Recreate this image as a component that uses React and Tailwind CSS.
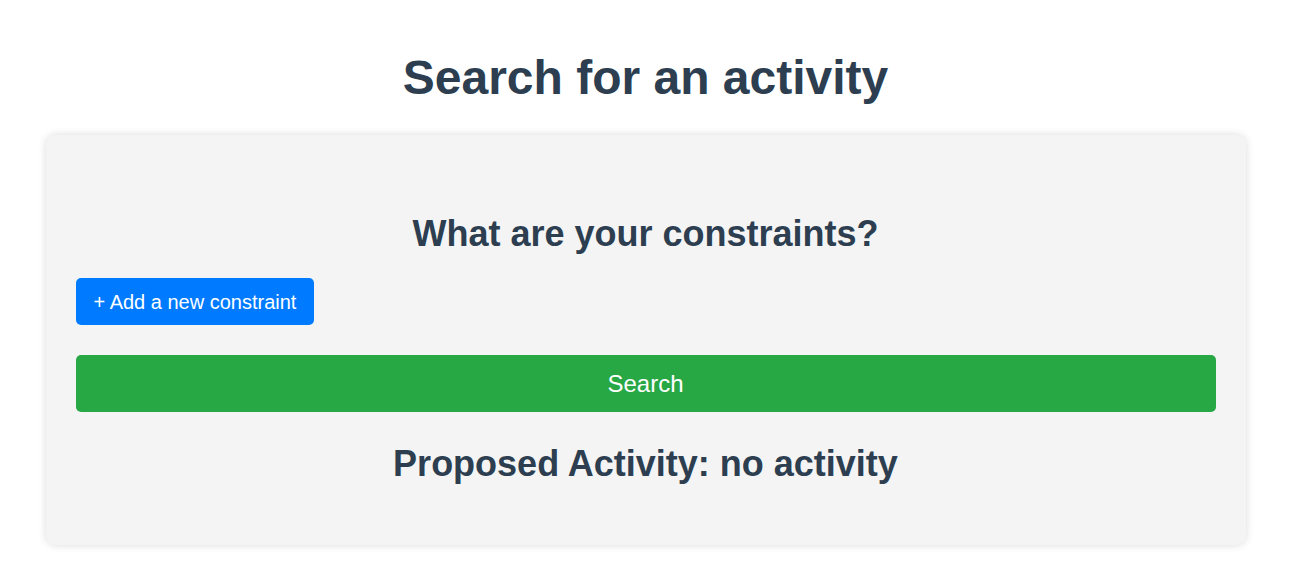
export default function App() {
  return (
    <div className="min-h-screen bg-white pr-[12px] font-['Liberation_Sans',Arial,sans-serif] text-[#2c3e50]">
      {/* Titre principal */}
      <h1 className="pt-[50px] text-center text-[48px] leading-[55px] font-bold">
        Search for an activity
      </h1>

      {/* Carte de recherche */}
      <div className="mx-auto mt-[30px] w-[1200px] rounded-[10px] bg-[#f4f4f4] px-[30px] pt-[78px] pb-[61px] shadow-[0_0_8px_rgba(0,0,0,0.15)]">
        <h2 className="text-center text-[36px] leading-[41px] font-bold">What are your constraints?</h2>

        <div className="mt-[24px] flex">
          <button className="h-[47px] rounded-[5px] bg-[#007bff] px-[18px] text-[20px] text-white">
            + Add a new constraint
          </button>
        </div>

        <button className="mt-[30px] h-[57px] w-full rounded-[5px] bg-[#28a745] text-[24px] text-white">
          Search
        </button>

        <h3 className="mt-[31px] text-center text-[36px] leading-[41px] font-bold">
          Proposed Activity: no activity
        </h3>
      </div>
    </div>
  );
}
